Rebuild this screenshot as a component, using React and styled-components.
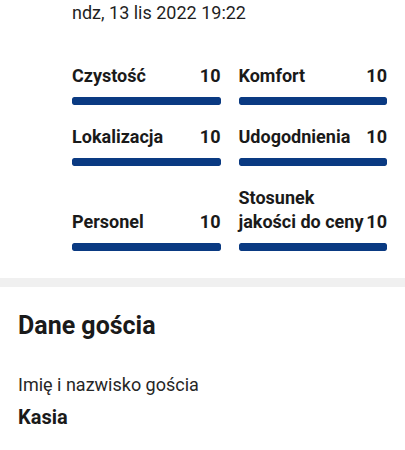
import React from "react";
import styled, { createGlobalStyle } from "styled-components";

const Global = createGlobalStyle`
  html, body { margin: 0; padding: 0; background: #fff; }
  body { font-family: Roboto, "Noto Sans", "Liberation Sans", sans-serif; color: #1a1a1a; -webkit-font-smoothing: antialiased; }
`;

const Page = styled.div`
  width: 405px;
  display: flex;
  flex-direction: column;
`;

const ScoreSection = styled.section`
  padding: 1px 18px 27px 72px;
  display: flex;
  flex-direction: column;
`;

const DateText = styled.div`
  font-size: 18px;
  line-height: 24px;
  color: #1f1f1f;
`;

const Grid = styled.div`
  margin-top: 39px;
  display: grid;
  grid-template-columns: 1fr 1fr;
  column-gap: 18px;
  row-gap: 20px;
  align-items: end;
`;

const Cell = styled.div`
  display: flex;
  flex-direction: column;
`;

const LabelRow = styled.div`
  display: flex;
  align-items: flex-end;
  justify-content: space-between;
  gap: 2px;
  font-size: 18px;
  line-height: 24px;
  font-weight: 700;
  color: #1a1a1a;
`;

const Label = styled.span`
  flex: 1;
  min-width: 0;
`;

const Score = styled.span`
  flex-shrink: 0;
`;

const Bar = styled.div`
  margin-top: 9px;
  height: 8px;
  border-radius: 2px;
  background: #e6e6e6;
  overflow: hidden;
`;

const Fill = styled.div`
  height: 100%;
  background: #0a3a82;
  border-radius: 2px;
`;

const Divider = styled.div`
  height: 9px;
  background: #f0f0f0;
`;

const GuestSection = styled.section`
  padding: 24px 18px 20px 18px;
  display: flex;
  flex-direction: column;
`;

const Heading = styled.h2`
  margin: 0;
  font-size: 25px;
  line-height: 30px;
  font-weight: 700;
  color: #1a1a1a;
`;

const FieldLabel = styled.div`
  margin-top: 32px;
  font-size: 18px;
  line-height: 24px;
  color: #262626;
`;

const FieldValue = styled.div`
  margin-top: 8px;
  font-size: 20px;
  line-height: 24px;
  font-weight: 700;
  color: #1a1a1a;
`;

const scores = [
  { label: "Czystość", value: 10 },
  { label: "Komfort", value: 10 },
  { label: "Lokalizacja", value: 10 },
  { label: "Udogodnienia", value: 10 },
  { label: "Personel", value: 10 },
  { label: "Stosunek jakości do ceny", value: 10 },
];

export default function App() {
  return (
    <Page>
      <Global />
      <ScoreSection>
        <DateText>ndz, 13 lis 2022 19:22</DateText>
        <Grid>
          {scores.map((s) => (
            <Cell key={s.label}>
              <LabelRow>
                <Label>{s.label}</Label>
                <Score>{s.value}</Score>
              </LabelRow>
              <Bar>
                <Fill style={{ width: `${(s.value / 10) * 100}%` }} />
              </Bar>
            </Cell>
          ))}
        </Grid>
      </ScoreSection>
      <Divider />
      <GuestSection>
        <Heading>Dane gościa</Heading>
        <FieldLabel>Imię i nazwisko gościa</FieldLabel>
        <FieldValue>Kasia</FieldValue>
      </GuestSection>
    </Page>
  );
}
